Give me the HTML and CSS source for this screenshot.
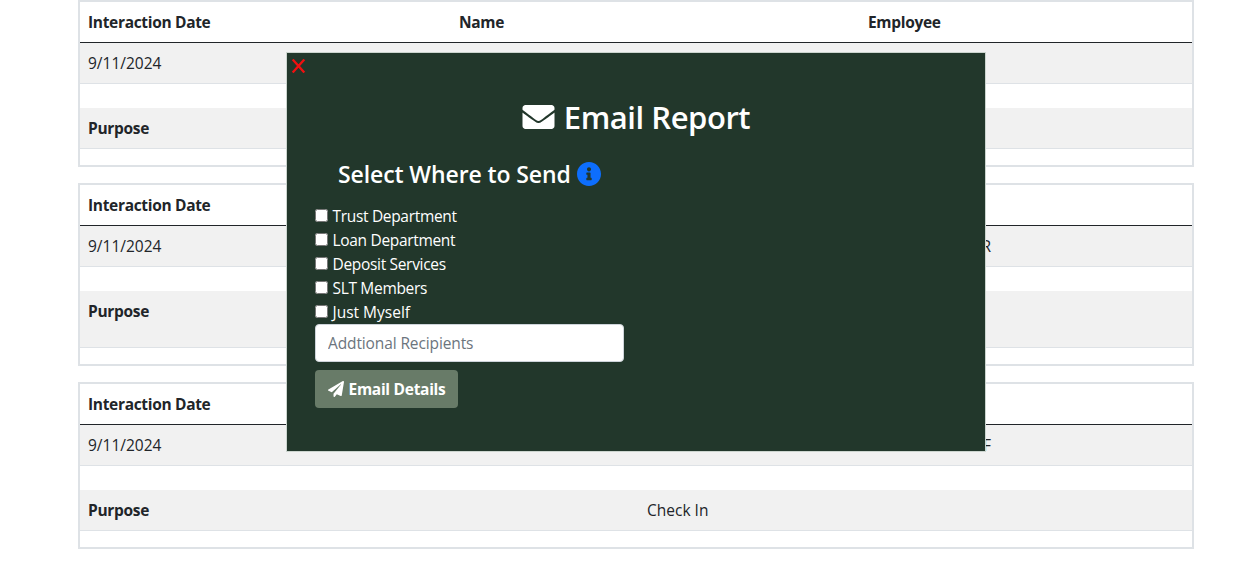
FILE: index.html
```
<!DOCTYPE html>
<html lang="en">
<head>
<meta charset="utf-8">
<title>Email Report</title>
<link rel="stylesheet" href="styles.css">
</head>
<body>
<main class="records">
  <section class="record">
    <div class="row head"><span>Interaction Date</span><span>Name</span><span>Employee</span></div>
    <div class="row values"><span class="regular">9/11/2024</span></div>
    <div class="row purpose"><b>Purpose</b></div>
  </section>
  <section class="record">
    <div class="row head"><span>Interaction Date</span><span>Name</span><span>Employee</span></div>
    <div class="row values"><span class="regular">9/11/2024</span><span></span><span class="initial">R</span></div>
    <div class="row purpose tall"><b>Purpose</b></div>
  </section>
  <section class="record">
    <div class="row head"><span>Interaction Date</span><span>Name</span><span>Employee</span></div>
    <div class="row values"><span class="regular">9/11/2024</span><span></span><span class="initial">F</span></div>
    <div class="row purpose"><b>Purpose</b><span class="reason">Check In</span></div>
  </section>
</main>

<div class="modal" role="dialog">
  <button class="close" type="button" aria-label="Close"><svg viewBox="0 0 14 14"><path d="M1.2 .5 12.8 13.5M12.8 .5 1.2 13.5"/></svg></button>
  <h1 class="title"><svg class="envelope" viewBox="0 64 512 384"><path d="M502.3 190.8c3.9-3.1 9.7-.2 9.7 4.7V400c0 26.5-21.5 48-48 48H48c-26.5 0-48-21.5-48-48V195.6c0-5 5.7-7.8 9.7-4.7 22.4 17.4 52.1 39.5 154.1 113.6 21.1 15.4 56.7 47.8 92.2 47.6 35.7.3 72-32.8 92.3-47.6 102-74.1 131.6-96.3 154-113.7zM256 320c23.2.4 56.6-29.2 73.4-41.4 132.7-96.3 142.8-104.7 173.4-128.7 5.8-4.5 9.2-11.5 9.2-18.9v-19c0-26.5-21.5-48-48-48H48c-26.5 0-48 21.5-48 48v19c0 7.4 3.4 14.3 9.2 18.9 30.6 23.9 40.7 32.4 173.4 128.7 16.8 12.2 50.2 41.8 73.4 41.4z"/></svg><span>Email Report</span></h1>
  <h2 class="subtitle"><span>Select Where to Send</span><svg class="info" viewBox="8 8 496 496"><path d="M256 8C119.043 8 8 119.083 8 256c0 136.997 111.043 248 248 248s248-111.003 248-248C504 119.083 392.957 8 256 8zm0 110c23.196 0 42 18.804 42 42s-18.804 42-42 42-42-18.804-42-42 18.804-42 42-42zm56 254c0 6.627-5.373 12-12 12h-88c-6.627 0-12-5.373-12-12v-24c0-6.627 5.373-12 12-12h12v-64h-12c-6.627 0-12-5.373-12-12v-24c0-6.627 5.373-12 12-12h64c6.627 0 12 5.373 12 12v100h12c6.627 0 12 5.373 12 12v24z"/></svg></h2>
  <div class="options">
    <label><input type="checkbox"><span>Trust Department</span></label>
    <label><input type="checkbox"><span>Loan Department</span></label>
    <label><input type="checkbox"><span>Deposit Services</span></label>
    <label><input type="checkbox"><span>SLT Members</span></label>
    <label><input type="checkbox"><span class="loose">Just Myself</span></label>
  </div>
  <input class="recipients" type="text" placeholder="Addtional Recipients">
  <button class="send" type="button"><svg viewBox="0 0 512 512"><path d="M476 3.2L12.5 270.6c-18.1 10.4-15.8 35.6 2.2 43.2L121 358.4l287.3-253.2c5.5-4.9 13.3 2.6 8.6 8.3L176 407v80.5c0 23.6 28.5 32.9 42.5 15.8L282 426l124.6 52.2c14.2 6 30.4-2.9 33-18.2l72-432C515 7.8 493.3-6.8 476 3.2z"/></svg><span>Email Details</span></button>
</div>
</body>
</html>
```
FILE: styles.css
```
* { box-sizing: border-box; }
body {
  margin: 0;
  height: 561px;
  overflow: hidden;
  position: relative;
  background: #fff;
  color: #212529;
  font: 15.5px/24px "Open Sans", "Noto Sans", sans-serif;
}
.records { display: flex; flex-direction: column; gap: 16px; padding: 0 63px 0 78px; }
.record { border: 2px solid #dee2e6; padding-bottom: 16px; }
.row { display: grid; grid-template-columns: 371px 409px 1fr; height: 41px; padding: 8px; border-bottom: 1px solid #dee2e6; }
.head { border-bottom-color: #212529; font-weight: 700; letter-spacing: -.32px; }
.values { background: #f1f1f1; margin-bottom: 24px; }
.purpose { background: #f1f1f1; grid-template-columns: 559px 1fr; }
.purpose b { letter-spacing: -.3px; }
.tall { height: 57px; }
.initial { justify-self: start; width: 123px; text-align: right; }

.modal {
  position: absolute;
  left: 286px;
  top: 52px;
  width: 700px;
  height: 400px;
  padding: 45px 28px 0;
  border: 1px solid #ccd5cf;
  background: #22372b;
  color: #fff;
}
.close { position: absolute; left: 4px; top: 6px; width: 15px; height: 14px; padding: 0; border: 0; background: none; }
.close svg { display: block; width: 15px; height: 14px; fill: none; stroke: #f01010; stroke-width: 2.3; }
.title { display: flex; align-items: center; justify-content: center; gap: 9px; height: 38px; margin: 0; font-size: 31px; font-weight: 600; line-height: 38px; letter-spacing: -.45px; }
.envelope { width: 33px; height: 24px; fill: #fff; }
.subtitle { display: flex; align-items: center; gap: 6px; height: 29px; margin: 24px 0 15px 23px; font-size: 23px; font-weight: 600; line-height: 29px; letter-spacing: -.1px; }
.info { width: 24px; height: 24px; margin-bottom: 1px; fill: #0d6efd; }
.options label { display: flex; align-items: center; gap: 4.5px; height: 24px; letter-spacing: -.32px; }
.options input { width: 13px; height: 13px; margin: 0 0 2px; }
.options .loose { letter-spacing: 0; }
.recipients { display: block; width: 309px; height: 38px; padding: 6px 12px; border: 1px solid #ced4da; border-radius: 4px; background: #fff; font: inherit; letter-spacing: -.12px; }
.recipients::placeholder { color: #6c757d; opacity: 1; }
.send { display: flex; align-items: center; gap: 4.5px; width: 143px; height: 38px; margin-top: 8px; padding: 0 13px; border: 0; border-radius: 4px; background: #687b68; color: #fff; font: inherit; font-weight: 700; letter-spacing: -.28px; white-space: nowrap; }
.send svg { width: 16px; height: 16px; flex: none; fill: #fff; }
```
